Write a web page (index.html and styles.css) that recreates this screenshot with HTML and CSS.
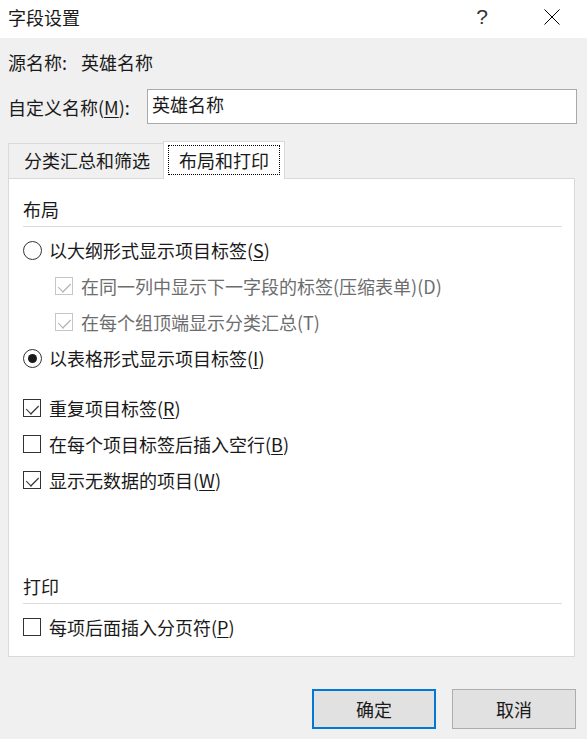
FILE: index.html
```html
<!DOCTYPE html>
<html lang="zh-CN">
<head>
<meta charset="utf-8">
<title>字段设置</title>
<link rel="stylesheet" href="styles.css">
</head>
<body>
<div class="titlebar">
  <span class="title">字段设置</span>
  <span class="help">?</span>
  <span class="close"><svg width="16" height="16" viewBox="0 0 16 16"><path d="M0.5 0.5L15.5 15.5M15.5 0.5L0.5 15.5" stroke="#000" stroke-width="1" fill="none"/></svg></span>
</div>
<div class="main">
  <div class="row-src"><span class="lbl-src">源名称:</span><span>英雄名称</span></div>
  <div class="row-custom"><span class="lbl-custom">自定义名称(<u>M</u>):</span><div class="input">英雄名称</div></div>
  <div class="tabs">
    <div class="tab">分类汇总和筛选</div>
    <div class="tab active"><span class="focus">布局和打印</span></div>
  </div>
  <div class="panel">
    <div class="section">布局</div>
    <div class="sep"></div>
    <div class="group">
      <div class="opt"><span class="radio"></span>以大纲形式显示项目标签(<u>S</u>)</div>
      <div class="opt sub disabled"><span class="check on"></span>在同一列中显示下一字段的标签(压缩表单)(D)</div>
      <div class="opt sub disabled"><span class="check on"></span>在每个组顶端显示分类汇总(T)</div>
      <div class="opt"><span class="radio sel"></span>以表格形式显示项目标签(<u>I</u>)</div>
    </div>
    <div class="group g2">
      <div class="opt"><span class="check on"></span>重复项目标签(<u>R</u>)</div>
      <div class="opt"><span class="check"></span>在每个项目标签后插入空行(<u>B</u>)</div>
      <div class="opt"><span class="check on"></span>显示无数据的项目(<u>W</u>)</div>
    </div>
    <div class="section s2">打印</div>
    <div class="sep"></div>
    <div class="group">
      <div class="opt"><span class="check"></span>每项后面插入分页符(<u>P</u>)</div>
    </div>
  </div>
  <div class="buttons">
    <div class="btn default">确定</div>
    <div class="btn">取消</div>
  </div>
</div>
</body>
</html>
```
FILE: styles.css
```css
* { box-sizing: border-box; }
html, body { margin: 0; padding: 0; }
body {
  width: 587px;
  height: 739px;
  overflow: hidden;
  background: #f0f0f0;
  font-family: "Noto Sans CJK SC", "Microsoft YaHei", sans-serif;
  font-size: 18px;
  color: #1a1a1a;
}
u { text-underline-offset: 2px; text-decoration-thickness: 1px; }
.titlebar {
  height: 38px;
  background: #fff;
  display: flex;
  align-items: center;
  padding-left: 8px;
  line-height: 24px;
}
.title { flex: 1; margin-top: -4px; }
.help {
  width: 20px;
  text-align: center;
  margin-right: 52px;
  font-family: "Liberation Sans", sans-serif;
  font-weight: 400;
  font-size: 21px;
  color: #333;
  margin-top: -4px;
}
.close { width: 16px; height: 16px; margin-right: 27px; display: flex; margin-top: -4px; }
.main { padding: 0 10px 0 8px; }
.row-src {
  margin-top: 12px;
  height: 24px;
  line-height: 24px;
  display: flex;
}
.lbl-src { width: 73px; flex: none; }
.row-custom {
  margin-top: 15px;
  height: 35px;
  display: flex;
  align-items: center;
}
.lbl-custom { width: 139px; flex: none; }
.input {
  flex: 1;
  height: 35px;
  background: #fff;
  border: 1px solid #a9a9a9;
  padding: 0 4px;
  line-height: 28px;
}
.tabs {
  margin-top: 17px;
  height: 37px;
  display: flex;
  align-items: flex-end;
}
.tab {
  height: 35px;
  padding: 0 13px 0 15px;
  line-height: 33px;
  border-top: 1px solid #dadada;
  border-left: 1px solid #dadada;
}
.tab.active {
  height: 38px;
  margin-bottom: -1px;
  background: #fff;
  border: 1px solid #d9d9d9;
  border-bottom: none;
  padding: 3px 4px 0 4px;
  position: relative;
  z-index: 1;
}
.focus {
  display: block;
  height: 30px;
  line-height: 28px;
  padding: 0 10px 0 10px;
  border: 1px dotted #000;
}
.panel {
  width: 567px;
  height: 479px;
  background: #fff;
  border: 1px solid #d9d9d9;
  padding: 18px 12px 0 14px;
}
.section { height: 24px; line-height: 24px; }
.s2 { margin-top: 76px; }
.sep { height: 1px; background: #dcdcdc; margin-top: 5px; }
.group { margin-top: 5px; }
.g2 { margin-top: 14px; }
.opt {
  height: 36px;
  display: flex;
  align-items: center;
  line-height: 24px;
}
.opt.sub { padding-left: 32px; }
.opt.disabled { color: #6d6d6d; }
.radio {
  width: 19px;
  height: 19px;
  border: 1px solid #333;
  border-radius: 50%;
  margin-right: 7px;
  display: flex;
  align-items: center;
  justify-content: center;
  flex: none;
}
.radio.sel::after {
  content: "";
  width: 9px;
  height: 9px;
  border-radius: 50%;
  background: #1a1a1a;
}
.check {
  width: 18px;
  height: 18px;
  border: 1px solid #333;
  margin-right: 8px;
  flex: none;
  position: relative;
}
.check.on::after {
  content: "";
  position: absolute;
  left: 3px;
  top: 2px;
  width: 10px;
  height: 5px;
  border-left: 1px solid #333;
  border-bottom: 1px solid #333;
  transform: translate(0, 3px) rotate(-45deg) scale(1.05, 1.2);
}
.disabled .check { border-color: #c6c6c6; }
.disabled .check.on::after { border-color: #b4b4b4; }
.buttons {
  margin-top: 32px;
  display: flex;
  justify-content: flex-end;
  gap: 16px;
  padding-right: 1px;
}
.btn {
  width: 124px;
  height: 40px;
  background: #e1e1e1;
  border: 1px solid #adadad;
  display: flex;
  align-items: center;
  justify-content: center;
}
.btn.default { border: 2px solid #0078d7; }
```
